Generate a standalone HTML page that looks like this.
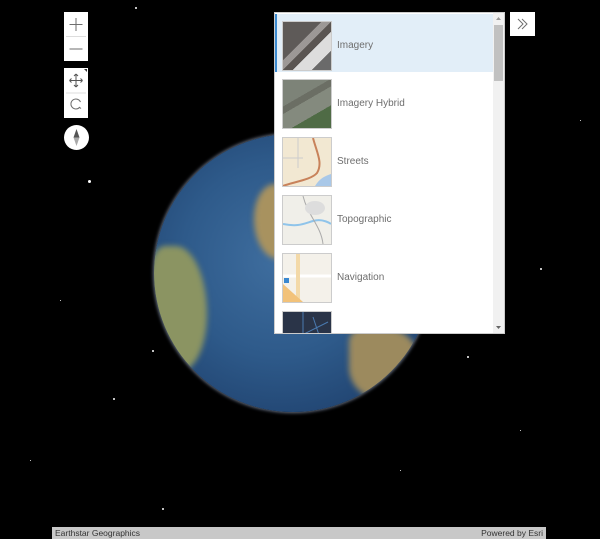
<!DOCTYPE html>
<html><head><meta charset="utf-8"><style>
*{margin:0;padding:0;box-sizing:border-box}
body{width:600px;height:539px;background:#000;position:relative;overflow:hidden;font-family:"Liberation Sans",sans-serif}
.star{position:absolute;background:#fff;border-radius:50%}
.globe{position:absolute;left:154px;top:134px;width:278px;height:278px;border-radius:50%;overflow:hidden;
background:radial-gradient(circle at 45% 45%,#3f6e9f 0%,#2e5a8a 45%,#224673 75%,#233d60 100%);
box-shadow:0 0 3px 1px rgba(200,220,255,.5)}
.land{position:absolute;border-radius:50%;filter:blur(3px)}
.btn{position:absolute;background:#fff;width:24px;height:24px}
.panel{position:absolute;left:274px;top:12px;width:231px;height:322px;background:#fff;border:1px solid #ccc;overflow:hidden}
.item{position:absolute;left:0;width:218px;height:58px}
.thumb{position:absolute;left:7px;top:7px;width:50px;height:50px;border:1px solid #ccc}
.lbl{position:absolute;left:62px;top:26px;font-size:10px;color:#6e6e6e}
.sb{position:absolute;left:218px;top:0;width:11px;height:320px;background:#f1f1f1}
.foot{position:absolute;left:52px;top:527px;width:494px;height:12px;background:#c8c8c8;font-size:8.5px;color:#333;line-height:12px;padding:0 3px}
</style></head><body>
<div class="star" style="left:88px;top:180px;width:3px;height:3px"></div>
<div class="star" style="left:152px;top:350px;width:2px;height:2px"></div>
<div class="star" style="left:113px;top:398px;width:2px;height:2px"></div>
<div class="star" style="left:162px;top:508px;width:2px;height:2px"></div>
<div class="star" style="left:135px;top:7px;width:2px;height:2px"></div>
<div class="star" style="left:467px;top:356px;width:2px;height:2px"></div>
<div class="star" style="left:580px;top:120px;width:1px;height:1px"></div>
<div class="star" style="left:520px;top:430px;width:1px;height:1px"></div>
<div class="star" style="left:60px;top:300px;width:1px;height:1px"></div>
<div class="star" style="left:540px;top:268px;width:2px;height:2px"></div>
<div class="star" style="left:30px;top:460px;width:1px;height:1px"></div>
<div class="star" style="left:400px;top:470px;width:1px;height:1px"></div>
<div class="globe">
 <div class="land" style="left:-5px;top:112px;width:58px;height:125px;background:#8b9462;border-radius:30% 60% 50% 40%"></div>
 <div class="land" style="left:100px;top:50px;width:45px;height:75px;background:#a8925f;border-radius:60% 10% 30% 70%"></div>
 <div class="land" style="left:195px;top:195px;width:70px;height:70px;background:#9c8a5e;border-radius:20% 50% 60% 50%"></div>
</div>
<div class="btn" style="left:64px;top:12px;height:49px">
 <svg width="24" height="49"><path d="M12 6v13M5.5 12.5h13" stroke="#6e6e6e" stroke-width="1"/><path d="M2 24.5h20" stroke="#ddd"/><path d="M5.5 37h13" stroke="#6e6e6e"/></svg>
</div>
<div class="btn" style="left:64px;top:68px;height:50px">
 <svg width="24" height="50"><path d="M12 6v13M5.5 12.5h13M12 6l-2 2M12 6l2 2M12 19l-2-2M12 19l2-2M5.5 12.5l2-2M5.5 12.5l2 2M18.5 12.5l-2-2M18.5 12.5l-2 2" stroke="#555" fill="none"/><path d="M20 1h3v3z" fill="#333"/><path d="M2 25h20" stroke="#ddd"/><path d="M15.5 39.5A5 5 0 1 1 16.5 34" stroke="#6e6e6e" fill="none"/><path d="M15 39l2 1.5" stroke="#6e6e6e"/></svg>
</div>
<div style="position:absolute;left:64px;top:125px;width:25px;height:25px;border-radius:50%;background:#fff">
 <svg width="25" height="25"><path d="M12.5 4l3 8.5h-6z" fill="#555"/><path d="M12.5 21l3-8.5h-6z" fill="#aaa"/></svg>
</div>
<div class="panel">
 <div class="item" style="top:1px;background:#e2eef8;border-left:2px solid #3b8ad0">
  <div class="thumb" style="left:5px;background:linear-gradient(135deg,#5e5a58 0 40%,#9c9896 40% 50%,#5a5552 50% 60%,#ddd 60% 80%,#6a6a6a 80%)"></div>
  <div class="lbl" style="left:60px">Imagery</div>
 </div>
 <div class="item" style="top:59px"><div class="thumb" style="background:linear-gradient(150deg,#7d8378 0 35%,#6b6e64 35% 45%,#848a7e 45% 70%,#4f6b45 70%)"></div><div class="lbl">Imagery Hybrid</div></div>
 <div class="item" style="top:117px"><div class="thumb" style="background:#f2e8d2"><svg width="48" height="48"><path d="M30 0C34 15 40 25 34 35 28 42 10 44 0 48" stroke="#c8825a" stroke-width="2" fill="none"/><path d="M0 20h20M15 0v30" stroke="#ccc"/><path d="M32 48c5-8 10-10 16-12v12z" fill="#a9c8e8"/></svg></div><div class="lbl">Streets</div></div>
 <div class="item" style="top:175px"><div class="thumb" style="background:#f0efe9"><svg width="48" height="48"><path d="M0 28c15 3 20 0 30 -3s18 3 18 3" stroke="#8fc4ea" stroke-width="2" fill="none"/><path d="M20 0c5 20 18 30 20 48" stroke="#aaa" fill="none"/><ellipse cx="32" cy="12" rx="10" ry="7" fill="#ddd"/></svg></div><div class="lbl">Topographic</div></div>
 <div class="item" style="top:233px"><div class="thumb" style="background:#f4f1ea"><svg width="48" height="48"><path d="M0 22h48" stroke="#fff" stroke-width="3"/><path d="M15 0v48" stroke="#f3d9a8" stroke-width="4"/><path d="M0 30l20 18H0z" fill="#f2c27a"/><rect x="1" y="24" width="5" height="5" fill="#3a88d0"/></svg></div><div class="lbl">Navigation</div></div>
 <div class="item" style="top:291px"><div class="thumb" style="background:#2a3448"><svg width="48" height="48"><path d="M5 30l40-20M20 0v40M30 5l10 30" stroke="#4a7ab0" fill="none"/></svg></div></div>
 <div class="sb"><div style="position:absolute;left:1px;top:12px;width:9px;height:56px;background:#c1c1c1"></div>
  <svg width="11" height="320" style="position:absolute;left:0;top:0"><path d="M3 7l2.5-3 2.5 3z" fill="#999"/><path d="M3 313l2.5 3 2.5-3z" fill="#666"/></svg></div>
</div>
<div class="btn" style="left:510px;top:12px;width:25px;height:24px">
 <svg width="25" height="24"><path d="M8 7l5 5-5 5M12 7l5 5-5 5" stroke="#6e6e6e" fill="none"/></svg>
</div>
<div class="foot"><span>Earthstar Geographics</span><span style="float:right">Powered by Esri</span></div>
</body></html>
